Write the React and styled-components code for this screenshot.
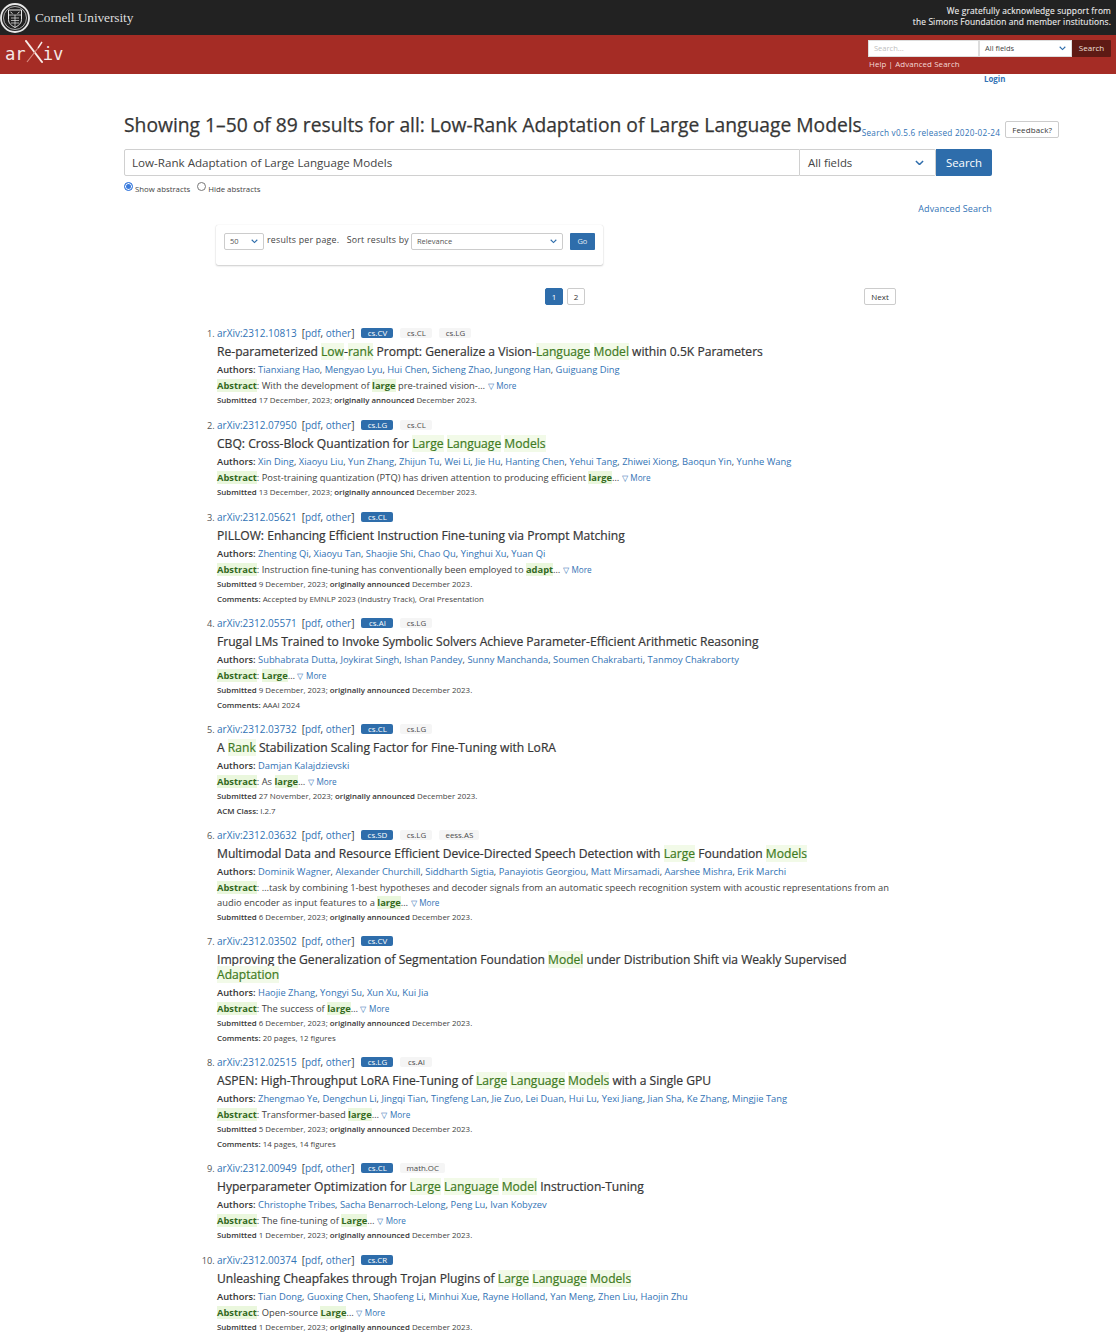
import React from "react";
import styled, { createGlobalStyle } from "styled-components";

const Global = createGlobalStyle`
  html, body { margin: 0; padding: 0; background: #fff; }
  body { font-family: "Open Sans", "Liberation Sans", sans-serif; color: #363636; -webkit-font-smoothing: antialiased; }
  * { box-sizing: border-box; }
  a { color: #3273b5; text-decoration: none; }
`;

const TopBar = styled.div`
  height: 35px; background: #222; display: flex; align-items: center; justify-content: space-between; padding: 0 5px 0 0;
`;
const Cornell = styled.div`display: flex; align-items: center; gap: 5px;`;
const CornellName = styled.span`
  font-family: "Liberation Serif", serif; font-size: 13.4px; color: #ddd; letter-spacing: -0.1px;
`;
const Thanks = styled.div`
  color: #eee; font-size: 8.4px; line-height: 11px; text-align: right; letter-spacing: 0.15px; padding-bottom: 3px; -webkit-text-stroke: .1px #eee;
`;
const RedBar = styled.div`
  height: 39px; background: #a52c25; display: flex; justify-content: space-between; padding: 5px 5px 0 0;
`;
const Logo = styled.div`
  display: flex; align-items: center; height: 26px; margin: 1px 0 0 5px; color: #f4e8e6;
  font-family: "DejaVu Sans Mono", monospace; font-size: 17.2px;
`;
const SearchBox = styled.div`width: 243px;`;
const HeadSearch = styled.div`display: flex; height: 17px;`;
const HeadInput = styled.div`
  width: 111px; background: #fff; border: 1px solid #ddd; font-size: 7.5px; line-height: 15px; color: #c0c0c0; padding-left: 5px;
`;
const HeadSelect = styled.div`
  width: 93px; background: #fff; border: 1px solid #ddd; font-size: 7.5px; line-height: 15px; color: #444; padding: 0 5px;
  display: flex; justify-content: space-between; align-items: center;
`;
const HeadButton = styled.div`
  width: 39px; background: #5e1a14; color: #f0e0dc; font-size: 8px; line-height: 15px; text-align: center; border-radius: 0 1px 1px 0;
`;
const HeadLinks = styled.div`color: #f4d9d5; font-size: 7.9px; line-height: 11px; margin-top: 2px; padding-left: 1px; letter-spacing: .1px;`;
const LoginRow = styled.div`height: 12px; padding: 0 0 0 984px; line-height: 11px; font-size: 7.9px; font-weight: 700;`;

const Main = styled.main`padding: 0 57px 0 124px;`;
const HeadingRow = styled.div`display: flex; align-items: flex-end; margin-top: 28px; height: 22px;`;
const Heading = styled.h1`
  margin: 0; font-size: 19.28px; line-height: 22px; font-weight: 400; color: #363636; white-space: nowrap; -webkit-text-stroke: .25px #363636;
`;
const Version = styled.a`font-size: 8.2px; line-height: 11px; white-space: nowrap; letter-spacing: .25px; margin-bottom: -2px;`;
const Feedback = styled.div`
  margin: 0 0 -2px 5px; width: 54px; height: 17px; border: 1px solid #ccc; border-radius: 2px; font-size: 8px; line-height: 15px;
  text-align: center; color: #363636; letter-spacing: .1px; flex: none;
`;
const SearchRow = styled.div`display: flex; width: 868px; height: 27px; margin-top: 13px;`;
const SearchInput = styled.div`
  flex: 1; border: 1px solid #d0d0d0; border-radius: 2px 0 0 2px; font-size: 11.62px; line-height: 25px; padding-left: 7px; color: #444;
`;
const SearchSelect = styled.div`
  width: 136px; border: 1px solid #d0d0d0; border-left: 0; border-radius: 0 2px 2px 0; font-size: 11.4px; line-height: 25px; padding: 0 11px 0 8px; color: #444;
  display: flex; justify-content: space-between; align-items: center;
`;
const SearchButton = styled.div`
  width: 56px; background: #2e6dab; color: #fff; font-size: 11.4px; line-height: 27px; text-align: center; border-radius: 0 2px 2px 0;
`;
const RadioRow = styled.div`display: flex; gap: 7px; margin-top: 6px; font-size: 7.8px; line-height: 12px; color: #444; padding-top: 1px;`;
const RadioLabel = styled.label`display: flex; align-items: flex-start;`;
const Radio = styled.span`
  width: 9px; height: 9px; border-radius: 50%; margin: -1px 2px 0 0;
  border: 1px solid ${p => (p.$on ? "#3a7bdd" : "#777")};
  background: ${p => (p.$on ? "#3a7bdd" : "#fff")};
  box-shadow: ${p => (p.$on ? "inset 0 0 0 1px #fff" : "none")};
`;
const AdvancedRow = styled.div`width: 868px; text-align: right; font-size: 9px; line-height: 12px; margin-top: 8px; letter-spacing: .12px;`;
const SortBox = styled.div`
  margin: 10px 0 0 92px; width: 387px; height: 40px; border-radius: 2px; box-shadow: 0 1px 2px rgba(0,0,0,.2), 0 0 1px rgba(0,0,0,.15);
  display: flex; align-items: flex-start; padding: 8px 8px 0 8px; font-size: 8.8px; line-height: 13px; color: #444;
`;
const MiniSelect = styled.div`
  width: ${p => p.$w}px; height: 17px; border: 1px solid #ccc; border-radius: 2px; font-size: 7.5px; line-height: 15px; padding: 0 5px; color: #555;
  display: flex; justify-content: space-between; align-items: center; flex: none;
`;
const SortLabel = styled.span`margin: 1px 2px 0 3px; white-space: nowrap; letter-spacing: .22px;`;
const GoButton = styled.div`
  margin-left: 7px; width: 25px; height: 17px; background: #2e6dab; border-radius: 1px; color: #e0ebf5; font-size: 7.5px; line-height: 16px; text-align: center;
`;
const Pager = styled.nav`display: flex; margin: 23px 0 0 93px; width: 679px; height: 17px; gap: 4px; font-size: 8px; line-height: 15px;`;
const Page = styled.div`
  width: 18px; text-align: center; border-radius: 2px; margin-left: ${p => p.$ml || 0}px;
  border: 1px solid ${p => (p.$on ? "#2e6dab" : "#ccc")};
  background: ${p => (p.$on ? "#2e6dab" : "#fff")}; color: ${p => (p.$on ? "#fff" : "#363636")};
`;
const Next = styled.div`margin-left: auto; width: 32px; border: 1px solid #ccc; border-radius: 2px; text-align: center; color: #363636;`;
const List = styled.ol`margin: 19px 0 0; padding: 0 0 0 93px; width: 772px; font-size: 9.2px;`;
const Item = styled.li`margin-bottom: ${p => (p.$tight ? 7 : 8)}px; color: #555;`;
const IdLine = styled.div`height: 18px; display: flex; align-items: center; font-size: 10px; white-space: nowrap; color: #363636;`;
const IdLinks = styled.span`margin-left: 5px;`;
const Tags = styled.span`display: flex; gap: 7px; margin-left: 7px;`;
const Tag = styled.span`
  height: 10.5px; line-height: 10.5px; padding: 0 6px; border-radius: 2px; font-size: 7.9px;
  background: ${p => (p.$primary ? "#2e6dab" : "#f5f5f5")}; color: ${p => (p.$primary ? "#fff" : "#4a4a4a")};
  min-width: 32px; text-align: center;
`;
const Title = styled.div`
  padding: 2px 0 3px; font-size: 12.1px; line-height: 15px; color: #363636; -webkit-text-stroke: .2px;
`;
const Line = styled.div`line-height: ${p => p.$h}px; font-size: ${p => p.$s || 9.35}px; color: #444;`;
const Label = styled.b`font-weight: 600; color: #363636;`;
const Mark = styled.span`background: #f2fae8; color: #3f7a1f;`;
const MarkBold = styled.b`background: #eaf7dd; color: #33691e; font-weight: 700;`;
const More = styled.a`font-size: 8.2px; word-spacing: .5px;`;

const Chevron = ({ size = 8 }) => (
  <svg width={size} height={size * 0.62} viewBox="0 0 10 6" fill="none" stroke="#2e6dab" strokeWidth="1.6">
    <path d="M1 1l4 4 4-4" />
  </svg>
);

const Seal = () => (
  <svg width="30" height="32" viewBox="0 0 30 32" fill="none" stroke="#e8e8e8">
    <circle cx="15" cy="16" r="14" strokeWidth="1.8" />
    <circle cx="15" cy="16" r="11.5" strokeWidth=".7" />
    <path d="M8.5 8h13v9.5c0 4-3 6-6.5 8-3.5-2-6.5-4-6.5-8z" strokeWidth="1" />
    <path d="M8.5 13h13M15 13v12M11 16h8M11 18.5h8M11 21h8" strokeWidth=".7" />
    <path d="M10.5 10l2 1.5M19.5 10l-2 1.5" strokeWidth="1" />
  </svg>
);

const XMark = () => (
  <svg width="19" height="24" viewBox="0 0 19 24" fill="none" style={{ margin: "-4px -1px 0 -1px" }}>
    <path d="M1 1l16 21" stroke="#f8ece8" strokeWidth="2" strokeLinecap="round" />
    <path d="M2 22L13 8" stroke="#d98a80" strokeWidth="1.2" />
    <path d="M13 8l4-6" stroke="#f8ece8" strokeWidth="1.4" />
  </svg>
);

const rich = (s, Comp) =>
  s.split(/(\*[^*]+\*)/).map((part, i) =>
    part.startsWith("*") ? <Comp key={i}>{part.slice(1, -1)}</Comp> : part
  );

const Authors = ({ names }) => (
  <Line $h={16}>
    <Label>Authors:</Label>{" "}
    {names.map((n, i) => (
      <React.Fragment key={n}>
        <a href="#a">{n}</a>
        {i < names.length - 1 ? ", " : ""}
      </React.Fragment>
    ))}
  </Line>
);

const papers = [
  { id: "2312.10813", tags: ["cs.CV", "cs.CL", "cs.LG"], title: "Re-parameterized *Low*-*rank* Prompt: Generalize a Vision-*Language* *Model* within 0.5K Parameters",
    authors: ["Tianxiang Hao", "Mengyao Lyu", "Hui Chen", "Sicheng Zhao", "Jungong Han", "Guiguang Ding"],
    abs: "With the development of *large* pre-trained vision-…", date: "17 December, 2023" },
  { id: "2312.07950", tags: ["cs.LG", "cs.CL"], title: "CBQ: Cross-Block Quantization for *Large* *Language* *Models*",
    authors: ["Xin Ding", "Xiaoyu Liu", "Yun Zhang", "Zhijun Tu", "Wei Li", "Jie Hu", "Hanting Chen", "Yehui Tang", "Zhiwei Xiong", "Baoqun Yin", "Yunhe Wang"],
    abs: "Post-training quantization (PTQ) has driven attention to producing efficient *large*…", date: "13 December, 2023" },
  { id: "2312.05621", tags: ["cs.CL"], title: "PILLOW: Enhancing Efficient Instruction Fine-tuning via Prompt Matching",
    authors: ["Zhenting Qi", "Xiaoyu Tan", "Shaojie Shi", "Chao Qu", "Yinghui Xu", "Yuan Qi"],
    abs: "Instruction fine-tuning has conventionally been employed to *adapt*…", date: "9 December, 2023", note: ["Comments:", "Accepted by EMNLP 2023 (Industry Track), Oral Presentation"] },
  { id: "2312.05571", tags: ["cs.AI", "cs.LG"], title: "Frugal LMs Trained to Invoke Symbolic Solvers Achieve Parameter-Efficient Arithmetic Reasoning",
    authors: ["Subhabrata Dutta", "Joykirat Singh", "Ishan Pandey", "Sunny Manchanda", "Soumen Chakrabarti", "Tanmoy Chakraborty"],
    abs: "*Large*…", date: "9 December, 2023", note: ["Comments:", "AAAI 2024"] },
  { id: "2312.03732", tags: ["cs.CL", "cs.LG"], title: "A *Rank* Stabilization Scaling Factor for Fine-Tuning with LoRA",
    authors: ["Damjan Kalajdzievski"], abs: "As *large*…", date: "27 November, 2023", note: ["ACM Class:", "I.2.7"] },
  { id: "2312.03632", tags: ["cs.SD", "cs.LG", "eess.AS"], title: "Multimodal Data and Resource Efficient Device-Directed Speech Detection with *Large* Foundation *Models*",
    authors: ["Dominik Wagner", "Alexander Churchill", "Siddharth Sigtia", "Panayiotis Georgiou", "Matt Mirsamadi", "Aarshee Mishra", "Erik Marchi"],
    abs: "…task by combining 1-best hypotheses and decoder signals from an automatic speech recognition system with acoustic representations from an audio encoder as input features to a *large*…", date: "6 December, 2023", tight: true },
  { id: "2312.03502", tags: ["cs.CV"], title: "Improving the Generalization of Segmentation Foundation *Model* under Distribution Shift via Weakly Supervised *Adaptation*",
    authors: ["Haojie Zhang", "Yongyi Su", "Xun Xu", "Kui Jia"], abs: "The success of *large*…", date: "6 December, 2023", note: ["Comments:", "20 pages, 12 figures"] },
  { id: "2312.02515", tags: ["cs.LG", "cs.AI"], title: "ASPEN: High-Throughput LoRA Fine-Tuning of *Large* *Language* *Models* with a Single GPU",
    authors: ["Zhengmao Ye", "Dengchun Li", "Jingqi Tian", "Tingfeng Lan", "Jie Zuo", "Lei Duan", "Hui Lu", "Yexi Jiang", "Jian Sha", "Ke Zhang", "Mingjie Tang"],
    abs: "Transformer-based *large*…", date: "5 December, 2023", note: ["Comments:", "14 pages, 14 figures"] },
  { id: "2312.00949", tags: ["cs.CL", "math.OC"], title: "Hyperparameter Optimization for *Large* *Language* *Model* Instruction-Tuning",
    authors: ["Christophe Tribes", "Sacha Benarroch-Lelong", "Peng Lu", "Ivan Kobyzev"], abs: "The fine-tuning of *Large*…", date: "1 December, 2023" },
  { id: "2312.00374", tags: ["cs.CR"], title: "Unleashing Cheapfakes through Trojan Plugins of *Large* *Language* *Models*",
    authors: ["Tian Dong", "Guoxing Chen", "Shaofeng Li", "Minhui Xue", "Rayne Holland", "Yan Meng", "Zhen Liu", "Haojin Zhu"], abs: "Open-source *Large*…", date: "1 December, 2023" },
];

export default function App() {
  return (
    <>
      <Global />
      <TopBar>
        <Cornell><Seal /><CornellName>Cornell University</CornellName></Cornell>
        <Thanks>We gratefully acknowledge support from<br />the Simons Foundation and member institutions.</Thanks>
      </TopBar>
      <RedBar>
        <Logo>ar<XMark />iv</Logo>
        <SearchBox>
          <HeadSearch>
            <HeadInput>Search...</HeadInput>
            <HeadSelect>All fields<Chevron size={7} /></HeadSelect>
            <HeadButton>Search</HeadButton>
          </HeadSearch>
          <HeadLinks>Help | Advanced Search</HeadLinks>
        </SearchBox>
      </RedBar>
      <LoginRow><a href="#l">Login</a></LoginRow>
      <Main>
        <HeadingRow>
          <Heading>Showing 1–50 of 89 results for all: Low-Rank Adaptation of Large Language Models</Heading>
          <Version href="#v">Search v0.5.6 released 2020-02-24</Version>
          <Feedback>Feedback?</Feedback>
        </HeadingRow>
        <SearchRow>
          <SearchInput>Low-Rank Adaptation of Large Language Models</SearchInput>
          <SearchSelect>All fields<Chevron size={9} /></SearchSelect>
          <SearchButton>Search</SearchButton>
        </SearchRow>
        <RadioRow>
          <RadioLabel><Radio $on />Show abstracts</RadioLabel>
          <RadioLabel><Radio />Hide abstracts</RadioLabel>
        </RadioRow>
        <AdvancedRow><a href="#s">Advanced Search</a></AdvancedRow>
        <SortBox>
          <MiniSelect $w={40}>50<Chevron size={7} /></MiniSelect>
          <SortLabel>results per page.&nbsp;&nbsp; Sort results by</SortLabel>
          <MiniSelect $w={152}>Relevance<Chevron size={7} /></MiniSelect>
          <GoButton>Go</GoButton>
        </SortBox>
        <Pager>
          <Page $on $ml={328}>1</Page>
          <Page>2</Page>
          <Next>Next</Next>
        </Pager>
        <List>
          {papers.map(p => (
            <Item key={p.id} $tight={p.tight}>
              <IdLine>
                <a href="#p">arXiv:{p.id}</a>
                <IdLinks>[<a href="#p">pdf</a>, <a href="#p">other</a>]</IdLinks>
                <Tags>
                  {p.tags.map((t, i) => <Tag key={t} $primary={i === 0}>{t}</Tag>)}
                </Tags>
              </IdLine>
              <Title>{rich(p.title, Mark)}</Title>
              <Authors names={p.authors} />
              <Line $h={15}>
                <MarkBold>Abstract</MarkBold>: {rich(p.abs, MarkBold)} <More href="#m">▽ More</More>
              </Line>
              <Line $h={15} $s={7.9}>
                <Label>Submitted</Label> {p.date}; <Label>originally announced</Label> December 2023.
              </Line>
              {p.note && <Line $h={14} $s={7.9}><Label>{p.note[0]}</Label> {p.note[1]}</Line>}
            </Item>
          ))}
        </List>
      </Main>
    </>
  );
}
